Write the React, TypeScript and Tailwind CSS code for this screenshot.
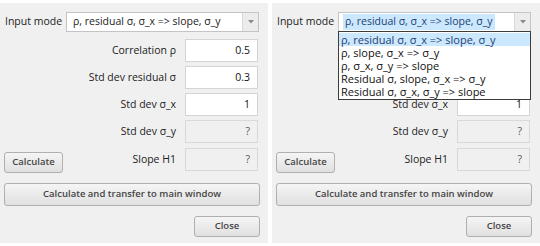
import React from "react";

const MODES = [
  "ρ, residual σ, σ_x => slope, σ_y",
  "ρ, slope, σ_x => σ_y",
  "ρ, σ_x, σ_y => slope",
  "Residual σ, slope, σ_x => σ_y",
  "Residual σ, σ_x, σ_y => slope",
];

type Field = { label: string; value: string; disabled?: boolean };

const FIELDS: Field[] = [
  { label: "Correlation ρ", value: "0.5" },
  { label: "Std dev residual σ", value: "0.3" },
  { label: "Std dev σ_x", value: "1" },
  { label: "Std dev σ_y", value: "?", disabled: true },
];

// petit bouton gris style Windows
function Btn({ children, className }: { children: React.ReactNode; className: string }) {
  return (
    <button
      className={
        "flex items-center justify-center rounded-[3px] border border-[#b0b0b0] bg-gradient-to-b from-[#f5f5f5] to-[#e0e0e0] text-[9.5px] font-semibold text-[#454545] " +
        className
      }
    >
      {children}
    </button>
  );
}

function ValueBox({ field }: { field: Field }) {
  return (
    <div
      className={
        "flex h-[23px] w-[73px] items-center justify-end border pr-[7px] " +
        (field.disabled ? "border-[#d9d9d9] bg-[#f0f0f0] text-[#555]" : "border-[#d4d4d4] bg-white text-[#111]")
      }
    >
      {field.value}
    </div>
  );
}

function Panel({ open }: { open?: boolean }) {
  return (
    <div className="flex h-[240px] w-[268px] flex-col bg-[#f0f0f0] pl-[4px] pr-[8px] pt-[9px]">
      {/* Input mode */}
      <div className="flex h-[20px] items-center">
        <span className="w-[62px] pl-[1px] text-[#222]">Input mode</span>
        <div className="relative z-10 flex h-[20px] w-[193px] border border-[#c4c4c4] bg-white">
          <div className="flex flex-1 items-center pl-[4px]">
            <span className={open ? "bg-[#cce8ff] px-[2px] text-[#1d3f72]" : "px-[2px] text-[#222]"}>{MODES[0]}</span>
          </div>
          <div className="flex w-[16px] items-center justify-center border-l border-[#d9d9d9] bg-[#ececec]">
            <svg width="6" height="4" viewBox="0 0 6 4">
              <path d="M0 0H6L3 3.5Z" fill="#8a8a8a" />
            </svg>
          </div>
          {open && (
            <div className="absolute left-[-1px] top-[18px] w-[193px] border border-[#3c3c3c] bg-white pb-[1px] pt-px text-[11px]">
              {MODES.map((m, i) => (
                <div
                  key={m}
                  className={
                    "flex h-[13px] items-center pl-[2px] leading-none " +
                    (i === 0 ? "bg-[#cce8ff] text-[#1d3f72]" : "text-[#111]")
                  }
                >
                  {m}
                </div>
              ))}
            </div>
          )}
        </div>
      </div>

      {/* champs */}
      <div className="mt-[7px] flex flex-col gap-[4px]">
        {FIELDS.map((f, i) => (
          <div
            key={f.label}
            className={"flex items-center justify-end gap-[9px] pr-[2px] " + (open && i < 2 ? "invisible" : "")}
          >
            <span className="text-[#222]">{f.label}</span>
            <ValueBox field={f} />
          </div>
        ))}
        <div className="mt-px flex items-start pr-[2px]">
          <Btn className="mt-[4px] h-[21px] w-[59px]">Calculate</Btn>
          <div className="flex flex-1 items-center justify-end gap-[9px]">
            <span className="text-[#222]">Slope H1</span>
            <ValueBox field={{ label: "Slope H1", value: "?", disabled: true }} />
          </div>
        </div>
      </div>

      <Btn className="mt-[10px] h-[23px] w-[256px]">Calculate and transfer to main window</Btn>
      <div className="mt-[10px] flex justify-end">
        <Btn className="h-[21px] w-[66px]">Close</Btn>
      </div>
    </div>
  );
}

export default function App() {
  return (
    <div
      className="flex h-[246px] w-[540px] gap-[4px] bg-white pt-[3px] text-[10.5px]"
      style={{ fontFamily: '"Open Sans", "Noto Sans", sans-serif' }}
    >
      <Panel />
      <Panel open />
    </div>
  );
}
